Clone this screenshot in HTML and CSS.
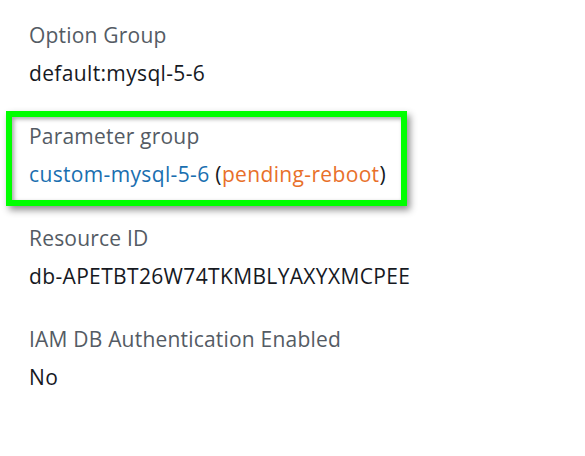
FILE: index.html
```html
<!DOCTYPE html>
<html>
<head>
<meta charset="utf-8">
<link rel="stylesheet" href="styles.css">
</head>
<body>
<div class="details">
  <div class="field">
    <div class="label">Option Group</div>
    <div class="value">default:mysql-5-6</div>
  </div>
  <div class="field highlight">
    <div class="label">Parameter group</div>
    <div class="value"><span class="link">custom-mysql-5-6</span> (<span class="pending">pending-reboot</span>)</div>
  </div>
  <div class="field">
    <div class="label">Resource ID</div>
    <div class="value">db-APETBT26W74TKMBLYAXYXMCPEE</div>
  </div>
  <div class="field">
    <div class="label">IAM DB Authentication Enabled</div>
    <div class="value">No</div>
  </div>
</div>
</body>
</html>
```
FILE: styles.css
```css
html, body {
  margin: 0;
  padding: 0;
  background: #ffffff;
}
body {
  font-family: "Open Sans", "Noto Sans", sans-serif;
  font-size: 21px;
  letter-spacing: 0.2px;
}
.details {
  padding: 16px 0 0 29px;
  display: flex;
  flex-direction: column;
  align-items: flex-start;
}
.field {
  margin-bottom: 25px;
}
.label, .value {
  line-height: 38px;
  height: 38px;
  white-space: nowrap;
}
.label {
  color: #545b64;
}
.value {
  color: #16191f;
  letter-spacing: 0.35px;
}
.highlight {
  margin: -6px 0 13px -23px;
  width: 401px;
  box-sizing: border-box;
  border: 6px solid #00ff00;
  padding: 0 0 7px 17px;
  box-shadow: inset 2px 2px 4px rgba(0,0,0,0.35), 3px 4px 7px rgba(0,0,0,0.45);
}
.link {
  color: #1a6fb0;
}
.pending {
  color: #e8702a;
}
```
